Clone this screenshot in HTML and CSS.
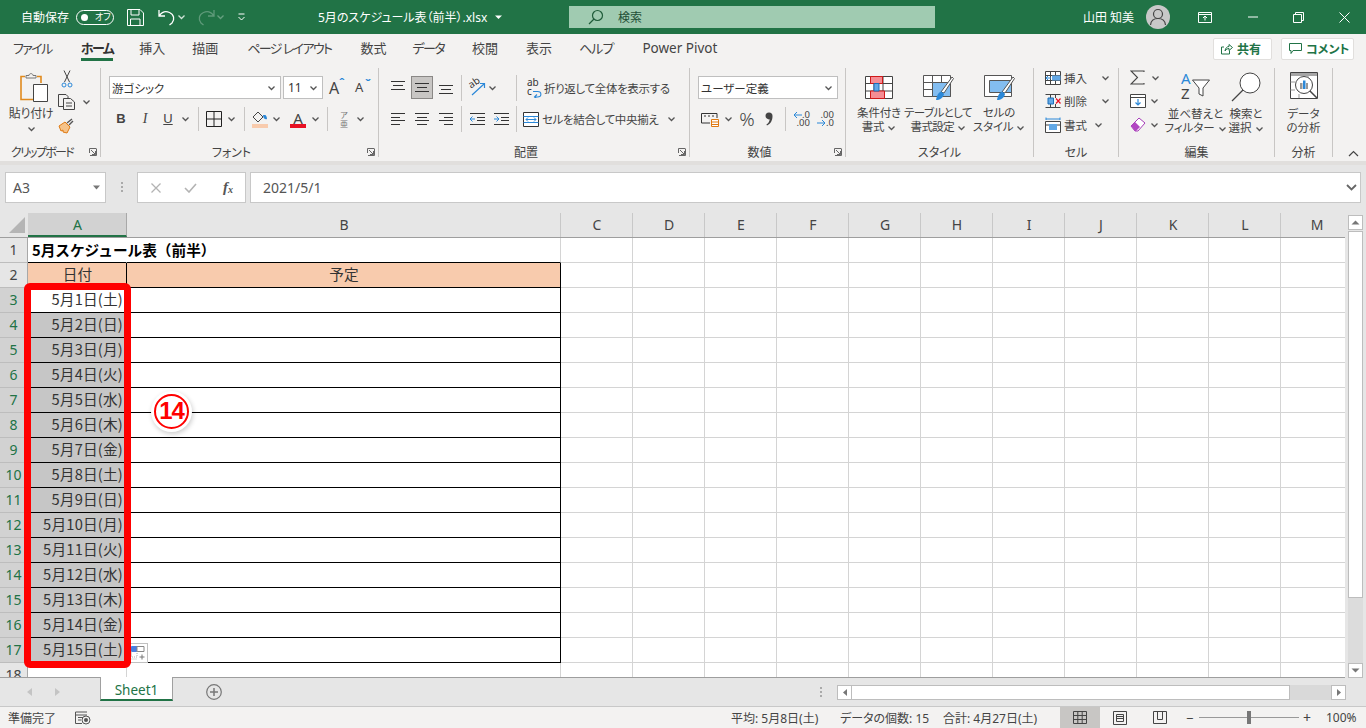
FILE: index.html
```html
<!DOCTYPE html>
<html lang="ja">
<head>
<meta charset="utf-8">
<title>5月のスケジュール表（前半）.xlsx</title>
<link rel="stylesheet" href="styles.css">
</head>
<body>
<svg class="defs" width="0" height="0"><defs>
<symbol id="chev" viewBox="0 0 9 6"><path d="M1.500 1.500 4.500 4.500 7.500 1.500" fill="none" stroke="#555" stroke-width="1.300"/></symbol>
<symbol id="chevw" viewBox="0 0 9 6"><path d="M1.500 1.500 4.500 4.500 7.500 1.500" fill="none" stroke="#cfe3d7" stroke-width="1.300"/></symbol>
<symbol id="launch" viewBox="0 0 8 8"><path d="M.5 5V.5H7.500M2 2l4.500 4.500M3 6.500h3.500V3M7.500 1v6.500H1" fill="none" stroke="#666" stroke-width="1"/></symbol>
</defs></svg>

<header class="titlebar">
  <span class="t-auto">自動保存</span>
  <span class="toggle"><i class="knob"></i><b>オフ</b></span>
  <svg class="m13" width="17" height="17" viewBox="0 0 17 17"><path d="M.5.500H13L16.500 4V16.500H.5ZM4 .5V6H12V.5M3.500 16.500V10H13V16.500" fill="none" stroke="#fff"/></svg>
  <svg class="m13" width="20" height="18" viewBox="0 0 20 18"><path d="M2 2V8H8M2.500 7.500C5 4 9 3 12.500 4.500 17 6.500 18 11.500 15 15L12.500 17" fill="none" stroke="#fff" stroke-width="1.300"/></svg>
  <svg width="9" height="6"><use href="#chevw"/></svg>
  <svg class="m10" width="20" height="18" viewBox="0 0 20 18"><path d="M18 2V8H12M17.500 7.500C15 4 11 3 7.500 4.500 3 6.500 2 11.500 5 15L7.500 17" fill="none" stroke="#5f9a7a" stroke-width="1.300"/></svg>
  <svg width="9" height="6"><use href="#chevw" opacity=".4"/></svg>
  <svg class="m12" width="9" height="8" viewBox="0 0 9 8"><path d="M1.500 1H7.500M1.500 4 4.500 7 7.500 4" fill="none" stroke="#fff"/></svg>
  <span class="t-file">5月のスケジュール表（前半）.xlsx</span>
  <svg class="m4" width="9" height="6" viewBox="0 0 9 6"><path d="M1 1.500H8L4.500 5Z" fill="#fff"/></svg>
  <div class="searchbox">
    <svg width="16" height="16" viewBox="0 0 16 16"><circle cx="9.500" cy="6.500" r="5" fill="none" stroke="#1f5c3a" stroke-width="1.200"/><path d="M6 10 1 15" stroke="#1f5c3a" stroke-width="1.200"/></svg>
    <span>検索</span>
  </div>
  <span class="t-user">山田 知美</span>
  <span class="avatar"><svg width="24" height="24" viewBox="0 0 24 24"><circle cx="12" cy="9" r="4.500" fill="none" stroke="#444" stroke-width="1.200"/><path d="M4.500 20C5 15 8.500 13.500 12 13.500S19 15 19.500 20" fill="none" stroke="#444" stroke-width="1.200"/></svg></span>
  <svg class="m28" width="14" height="11" viewBox="0 0 14 11"><path d="M.5.500H13.500V10.500H.5ZM.5 2.500H13.500M7 8.500V4.500M5 6 7 4 9 6" fill="none" stroke="#fff"/></svg>
  <svg class="m33" width="10" height="2" viewBox="0 0 10 2"><path d="M0 1H10" stroke="#fff"/></svg>
  <svg class="m35" width="11" height="11" viewBox="0 0 11 11"><path d="M.5 2.500H8.500V10.500H.5ZM2.500 2.500V.5H10.500V8.500H8.500" fill="none" stroke="#fff"/></svg>
  <svg class="m35" width="11" height="11" viewBox="0 0 11 11"><path d="M.5.500 10.500 10.500M10.500.5.5 10.500" stroke="#fff"/></svg>
</header>

<nav class="tabs">
  <span class="tab t1 kana2">ファイル</span>
  <span class="tab t2 active kana1">ホーム</span>
  <span class="tab t3">挿入</span>
  <span class="tab t4">描画</span>
  <span class="tab t5 kana2">ページ レイアウト</span>
  <span class="tab t6">数式</span>
  <span class="tab t7 kana2">データ</span>
  <span class="tab t8">校閲</span>
  <span class="tab t9">表示</span>
  <span class="tab t10 kana1">ヘルプ</span>
  <span class="tab t11">Power Pivot</span>
  <div class="tab-actions">
    <button class="act share"><svg width="12" height="12" viewBox="0 0 12 12"><path d="M8.500 7.500V11H.5V4H3M4 8C4.500 5 6 3.500 8 3.500V1.500L11.500 4.500 8 7.500V5.500C6.500 5.500 5 6.500 4 8Z" fill="none" stroke="#217346"/></svg>共有</button>
    <button class="act comment"><svg width="13" height="12" viewBox="0 0 13 12"><path d="M.5.500H12.500V7.500H4L2 10.500V7.500H.5Z" fill="none" stroke="#217346"/></svg>コメント</button>
  </div>
</nav>

<section class="ribbon">
  <div class="group g-clip">
    <div class="body">
      <div class="col paste">
        <svg class="paste-icon" width="28" height="32" viewBox="0 0 28 32"><path d="M5 4.500H1V27.500H13" fill="none" stroke="#e08a1e" stroke-width="1.600"/><path d="M17 4.500H21V11" fill="none" stroke="#e08a1e" stroke-width="1.600"/><path d="M6 6V3.500H9C9 1 13 1 13 3.500H16V6Z" fill="#f3f2f1" stroke="#777"/><path d="M13.500 12.500H27.500V29.500H13.500Z" fill="#fff" stroke="#444"/></svg>
        <span class="lbl">貼り付け</span>
        <svg class="lchev" width="9" height="6"><use href="#chev"/></svg>
      </div>
      <div class="col clip-tools">
        <div class="row-c">
          <svg class="m3" width="12" height="18" viewBox="0 0 12 18"><path d="M3 .5 8.500 12M9 .5 3.500 12" stroke="#444" fill="none"/><circle cx="3" cy="15" r="2" fill="none" stroke="#2b88d8"/><circle cx="9" cy="15" r="2" fill="none" stroke="#2b88d8"/></svg>
        </div>
        <div class="row-c">
          <svg width="18" height="16" viewBox="0 0 18 16"><path d="M5 12.500H.5V.5H8L10 2.500V4M5.500 4.500H12.500L16.500 8V15.500H5.500ZM8 9H14M8 12H14" fill="none" stroke="#444"/></svg>
          <svg class="m6" width="9" height="6"><use href="#chev"/></svg>
        </div>
        <div class="row-c">
          <svg width="16" height="16" viewBox="0 0 16 16"><path d="M1 8 7 4 12 9 9 15 5 14 5 12 3 13Z" fill="#f5c38a" stroke="#e07a12"/><path d="M9 5 14 1M11 7 15 3" stroke="#555" stroke-width="1.400"/></svg>
        </div>
      </div>
    </div>
    <div class="glabel gl-launch gl-tight">クリップボード</div>
    <svg class="launch" width="8" height="8"><use href="#launch"/></svg>
  </div>

  <div class="group g-font">
    <div class="body bodycol">
      <div class="rowa">
        <div class="sel fontsel"><span>游ゴシック</span><svg width="9" height="6"><use href="#chev"/></svg></div>
        <div class="sel sizesel"><span>11</span><svg width="9" height="6"><use href="#chev"/></svg></div>
        <span class="bigA m6">A<i class="up">ˆ</i></span>
        <span class="smallA m8">A<i class="dn">ˇ</i></span>
      </div>
      <div class="rowb">
        <b class="fmt m12">B</b>
        <i class="fmt fmt-i m8">I</i>
        <u class="fmt fmt-u m7">U</u>
        <svg class="m5" width="9" height="6"><use href="#chev"/></svg>
        <span class="vsep m8"></span>
        <svg class="m7" width="16" height="16" viewBox="0 0 16 16"><path d="M.5.500H15.500V15.500H.5ZM8 .5V15.500M.5 8H15.500" fill="none" stroke="#222"/></svg>
        <svg class="m5" width="9" height="6"><use href="#chev"/></svg>
        <span class="vsep m8"></span>
        <span class="colorbtn m7"><svg width="16" height="12" viewBox="0 0 16 12"><path d="M6 1 1 6 6 11 11 6Z" fill="none" stroke="#444"/><path d="M11 4H13C14 4 15 6 15 8 13 9 11 7 11 4Z" fill="#2b88d8"/></svg><em class="bar-fill"></em></span>
        <svg class="m4" width="9" height="6"><use href="#chev"/></svg>
        <span class="colorbtn m9"><span class="font-a">A</span><em class="bar-red"></em></span>
        <svg class="m5" width="9" height="6"><use href="#chev"/></svg>
        <span class="vsep m7"></span>
        <span class="ruby m8">ア<br>亜</span>
        <svg class="m4" width="9" height="6"><use href="#chev"/></svg>
      </div>
    </div>
    <div class="glabel gl-launch">フォント</div>
    <svg class="launch" width="8" height="8"><use href="#launch"/></svg>
  </div>

  <div class="group g-align">
    <div class="body bodycol">
      <div class="rowa rowa-al">
        <svg class="m12" width="14" height="10" viewBox="0 0 14 10"><path d="M0 .5H14M2 4.500H12M0 8.500H14" stroke="#333"/></svg>
        <span class="activebox m6"><svg width="14" height="10" viewBox="0 0 14 10"><path d="M0 .5H14M2 4.500H12M0 8.500H14" stroke="#333"/></svg></span>
        <svg class="m6 low" width="14" height="10" viewBox="0 0 14 10"><path d="M0 .5H14M2 4.500H12M0 8.500H14" stroke="#333"/></svg>
        <span class="vsep2 m8"></span>
        <span class="orient m7"><svg width="17" height="15" viewBox="0 0 17 15"><path d="M3 14 15 3M11 2.500H15.500V7" fill="none" stroke="#2b88d8" stroke-width="1.200"/></svg><em>ab</em></span>
        <svg class="m2" width="9" height="6"><use href="#chev"/></svg>
        <span class="vsep2 m19"></span>
        <span class="wrapicon m10"><em>ab<br>c</em><svg width="9" height="12" viewBox="0 0 9 12"><path d="M0 5.500H4.500C9 5.500 9 11 4.500 11H2M4 8.500 1.500 11 4 13" fill="none" stroke="#2b88d8" stroke-width="1.100"/></svg></span>
        <span class="txt m1">折り返して全体を表示する</span>
      </div>
      <div class="rowb rowb-al">
        <svg class="m12" width="14" height="12" viewBox="0 0 14 12"><path d="M0 .5H14M0 4.500H9M0 7.500H14M0 11.500H9" stroke="#333"/></svg>
        <svg class="m10" width="14" height="12" viewBox="0 0 14 12"><path d="M0 .5H14M2 4.500H12M0 7.500H14M2 11.500H12" stroke="#333"/></svg>
        <svg class="m10" width="14" height="12" viewBox="0 0 14 12"><path d="M0 .5H14M5 4.500H14M0 7.500H14M5 11.500H14" stroke="#333"/></svg>
        <span class="vsep2 m8"></span>
        <svg class="m8" width="15" height="12" viewBox="0 0 15 12"><path d="M0 .5H15M7 4.500H15M7 7.500H15M0 11.500H15" stroke="#333"/><path d="M5 6H0M2.500 3.500 0 6 2.500 8.500" fill="none" stroke="#2b88d8"/></svg>
        <svg class="m9" width="15" height="12" viewBox="0 0 15 12"><path d="M0 .5H15M7 4.500H15M7 7.500H15M0 11.500H15" stroke="#333"/><path d="M0 6H5M2.500 3.500 5 6 2.500 8.500" fill="none" stroke="#2b88d8"/></svg>
        <span class="vsep2 m7"></span>
        <svg class="m6" width="16" height="15" viewBox="0 0 16 15"><path d="M.5.500H15.500V14.500H.5Z" fill="#fff" stroke="#333"/><path d="M.5 4.500H15.500M.5 10.500H15.500" stroke="#2b88d8"/><path d="M3 7.500H13M5 5.500 3 7.500 5 9.500M11 5.500 13 7.500 11 9.500" fill="none" stroke="#2b88d8"/></svg>
        <span class="txt m3 w117">セルを結合して中央揃え</span>
        <svg class="m8" width="9" height="6"><use href="#chev"/></svg>
      </div>
    </div>
    <div class="glabel gl-launch">配置</div>
    <svg class="launch" width="8" height="8"><use href="#launch"/></svg>
  </div>

  <div class="group g-num">
    <div class="body bodycol">
      <div class="rowa"><div class="sel numsel"><span>ユーザー定義</span><svg width="9" height="6"><use href="#chev"/></svg></div></div>
      <div class="rowb">
        <svg class="m11" width="18" height="15" viewBox="0 0 18 15"><path d="M.5 1.500H16V6M9 11H.5V1.500M3 4H5M7 4H9M11 4H13" fill="none" stroke="#333"/><path d="M10.500 7.500H17.500V14.500H10.500ZM10.500 10H17.500M10.500 12.500H17.500" fill="#fff" stroke="#e07a12"/></svg>
        <svg class="m5" width="9" height="6"><use href="#chev"/></svg>
        <span class="pct m5">%</span>
        <svg class="m9" width="8" height="14" viewBox="0 0 8 14"><path d="M.5 4a3.500 3.500 0 1 1 7 0c0 4.500-2 8-5.500 9.500l-.6-1C3.500 11.300 4.500 9.500 4.700 7.300A3.500 3.500 0 0 1 .5 4Z" fill="#444"/></svg>
        <span class="vsep m12"></span>
        <span class="dec m7"><svg width="9" height="8" viewBox="0 0 9 8"><path d="M9 4H1M4 1 1 4 4 7" fill="none" stroke="#2b88d8"/></svg><em>.0<br>.00</em></span>
        <span class="dec m7"><svg class="arrowlow" width="9" height="8" viewBox="0 0 9 8"><path d="M0 4H8M5 1 8 4 5 7" fill="none" stroke="#2b88d8"/></svg><em>.00<br>.0</em></span>
      </div>
    </div>
    <div class="glabel gl-launch">数値</div>
    <svg class="launch" width="8" height="8"><use href="#launch"/></svg>
  </div>

  <div class="group g-style">
    <div class="body">
      <div class="col big w52 m7">
        <svg class="bigicon" width="28" height="24" viewBox="0 0 28 24"><path d="M.5.500H27.500V22.500H.5ZM.5 7.500H27.500M.5 15H27.500M9 .5V22.500M18 .5V22.500" fill="#fff" stroke="#444"/><path d="M5.500.5H17.500V7.500H5.500ZM5.500 15H19.500V22.500H5.500Z" fill="#f58d94" stroke="#d01818"/><path d="M9 7.500H14V15H9Z" fill="#62a8e6" stroke="#1a6fb8"/></svg>
        <span class="lbl">条件付き<br>書式 <svg width="9" height="6"><use href="#chev"/></svg></span>
      </div>
      <div class="col big w66">
        <svg class="bigicon" width="31" height="26" viewBox="0 0 31 26"><path d="M.5.500H27.500V21.500H.5ZM.5 7.500H27.500M.5 14.500H27.500M9.500.5V21.500M18.500.5V21.500" fill="#fff" stroke="#555"/><path d="M9.500 7.500H27.500V21.500H9.500Z" fill="#83bdf0" stroke="#555"/><path d="M18 17 29 2 30.500 3.500 21 18Z" fill="#fff" stroke="#555"/><path d="M13 25C14 20 16 16 19 17L21 19C20 23 17 25 13 25Z" fill="#2b88d8"/></svg>
        <span class="lbl">テーブルとして<br>書式設定 <svg width="9" height="6"><use href="#chev"/></svg></span>
      </div>
      <div class="col big w56">
        <svg class="bigicon" width="31" height="26" viewBox="0 0 31 26"><path d="M.5.500H27.500V21.500H.5Z" fill="#fff" stroke="#555"/><path d="M5.500 5.500H27.500V17.500H5.500Z" fill="#83bdf0" stroke="#555"/><path d="M18 17 29 2 30.500 3.500 21 18Z" fill="#fff" stroke="#555"/><path d="M13 25C14 20 16 16 19 17L21 19C20 23 17 25 13 25Z" fill="#2b88d8"/></svg>
        <span class="lbl">セルの<br>スタイル <svg width="9" height="6"><use href="#chev"/></svg></span>
      </div>
    </div>
    <div class="glabel">スタイル</div>
  </div>

  <div class="group g-cell">
    <div class="body bodycol cell-tools">
      <div class="cellrow"><svg width="16" height="14" viewBox="0 0 16 14"><path d="M.5.500H15.500V13.500H.5ZM.5 4.500H15.500M.5 9.500H15.500M5.500.5V13.500M10.500.5V13.500" fill="#fff" stroke="#444"/><path d="M7 4.500H15.500V9.500H7Z" fill="#62a8e6"/><path d="M6 7H1M3 5 1 7 3 9" fill="none" stroke="#2b88d8"/></svg><span class="txt m3 w28">挿入</span><svg class="m9" width="9" height="6"><use href="#chev"/></svg></div>
      <div class="cellrow"><svg width="16" height="14" viewBox="0 0 16 14"><path d="M.5.500H15.500M.5 13.500H15.500M5.500.5V4M5.500 10V13.500M10.500.5V4M10.500 10V13.500" fill="none" stroke="#444"/><path d="M3 4H8.500V10H3Z" fill="#62a8e6" stroke="#1a6fb8"/><path d="M11 4.500 15.500 9.500M15.500 4.500 11 9.500" stroke="#e81123" stroke-width="1.200"/></svg><span class="txt m3 w28">削除</span><svg class="m9" width="9" height="6"><use href="#chev"/></svg></div>
      <div class="cellrow"><svg width="16" height="16" viewBox="0 0 16 16"><path d="M1 .5V3M15 .5V3M1 2H15" fill="none" stroke="#2b88d8"/><path d="M.5 4.500H15.500V15.500H.5ZM.5 8H15.500" fill="#fff" stroke="#444"/><path d="M4 7H12V13H4Z" fill="#62a8e6"/></svg><span class="txt m3 w28">書式</span><svg class="m2" width="9" height="6"><use href="#chev"/></svg></div>
    </div>
    <div class="glabel">セル</div>
  </div>

  <div class="group g-edit">
    <div class="body">
      <div class="col edit-tools">
        <div class="cellrow2"><svg width="15" height="15" viewBox="0 0 15 15"><path d="M14 2V1H1L7.500 7.500 1 14H14V13" fill="none" stroke="#444" stroke-width="1.100"/></svg><svg class="m6" width="9" height="6"><use href="#chev"/></svg></div>
        <div class="cellrow2"><svg width="16" height="14" viewBox="0 0 16 14"><path d="M.5.500H15.500V13.500H.5ZM.5 3.500H15.500" fill="#fff" stroke="#444"/><path d="M8 5V11M5.500 8.500 8 11 10.500 8.500" fill="none" stroke="#2b88d8" stroke-width="1.200"/></svg><svg class="m4" width="9" height="6"><use href="#chev"/></svg></div>
        <div class="cellrow2"><svg width="16" height="15" viewBox="0 0 16 15"><path d="M1 9 9 1 15 6 8 14H5Z" fill="#fff" stroke="#a63db8"/><path d="M1 9 5 5 10 10 6 14 5 14Z" fill="#b146c2"/></svg><svg class="m4" width="9" height="6"><use href="#chev"/></svg></div>
      </div>
      <div class="col big w57">
        <svg class="bigicon2" width="30" height="28" viewBox="0 0 30 28"><text x="0" y="12" class="az-a">A</text><text x="0" y="27" class="az-z">Z</text><path d="M11.500 8H28.500L22 16V24L18 22V16Z" fill="#fff" stroke="#444"/></svg>
        <span class="lbl lbl-t">並べ替えと<br>フィルター <svg width="9" height="6"><use href="#chev"/></svg></span>
      </div>
      <div class="col big w44">
        <svg class="bigicon2" width="30" height="30" viewBox="0 0 30 30"><circle cx="19" cy="11" r="10" fill="#fff" stroke="#444"/><path d="M12 18 1 29" stroke="#444" stroke-width="1.200"/></svg>
        <span class="lbl lbl-t2">検索と<br>選択 <svg width="9" height="6"><use href="#chev"/></svg></span>
      </div>
    </div>
    <div class="glabel">編集</div>
  </div>

  <div class="group g-ana">
    <div class="body">
      <div class="col big w57">
        <svg class="bigicon2" width="28" height="28" viewBox="0 0 28 28"><path d="M.5.500H27.500V26.500H.5Z" fill="#fff" stroke="#444"/><path d="M1 1H27V4H1Z" fill="#a6a6a6"/><path d="M.5 10H5M.5 18H5M9 26V22M18 4V6" stroke="#999"/><circle cx="14" cy="13" r="8.500" fill="#fff" stroke="#444"/><path d="M10 11H12.500V17H10Z" fill="#999"/><path d="M13 8.500H15.500V17H13Z" fill="#2b88d8"/><path d="M16 11H18V17H16Z" fill="#999"/><path d="M20 19 27 26" stroke="#444" stroke-width="1.500"/></svg>
        <span class="lbl lbl-t">データ<br>の分析</span>
      </div>
    </div>
    <div class="glabel">分析</div>
  </div>
  <svg class="collapse" width="11" height="7" viewBox="0 0 11 7"><path d="M1 6 5.500 1.500 10 6" fill="none" stroke="#444" stroke-width="1.200"/></svg>
</section>

<div class="formula">
  <div class="namebox"><span>A3</span><svg width="9" height="5" viewBox="0 0 9 5"><path d="M1 .5H8L4.500 4.500Z" fill="#777"/></svg></div>
  <span class="fdots"></span>
  <div class="fbtns">
    <svg width="10" height="10" viewBox="0 0 10 10"><path d="M.5.500 9.500 9.500M9.500.5.5 9.500" stroke="#b3b3b3" stroke-width="1.300"/></svg>
    <svg width="13" height="10" viewBox="0 0 13 10"><path d="M1 5 5 9 12 1" fill="none" stroke="#b3b3b3" stroke-width="1.600"/></svg>
    <span class="fx">f<sub>x</sub></span>
  </div>
  <div class="finput"><span>2021/5/1</span><svg width="11" height="7" viewBox="0 0 11 7"><path d="M1 1 5.500 5.500 10 1" fill="none" stroke="#666" stroke-width="1.800"/></svg></div>
</div>

<div class="workarea">
  <div class="sheet">
    <div class="colhead">
      <div class="corner"><svg width="18" height="18" viewBox="0 0 18 18"><path d="M17 1V17H1Z" fill="#b5b5b5"/></svg></div>
      <div class="ch ch-a">A</div><div class="ch ch-b">B</div>
      <div class="ch ch-n">C</div><div class="ch ch-n">D</div><div class="ch ch-n">E</div><div class="ch ch-n">F</div><div class="ch ch-n">G</div><div class="ch ch-n">H</div><div class="ch ch-n">I</div><div class="ch ch-n">J</div><div class="ch ch-n">K</div><div class="ch ch-n">L</div><div class="ch ch-m">M</div>
    </div>
    <div class="row r-line"><div class="rh">1</div><div class="ca title-cell">5月スケジュール表（前半）</div><div class="cb"></div><div class="rest"></div></div>
    <div class="row r-head"><div class="rh">2</div><div class="ca">日付</div><div class="cb">予定</div><div class="rest"></div></div>
    <div class="row r-data r-first"><div class="rh">3</div><div class="ca">5月1日(土)</div><div class="cb"></div><div class="rest"></div></div>
    <div class="row r-data"><div class="rh">4</div><div class="ca">5月2日(日)</div><div class="cb"></div><div class="rest"></div></div>
    <div class="row r-data"><div class="rh">5</div><div class="ca">5月3日(月)</div><div class="cb"></div><div class="rest"></div></div>
    <div class="row r-data"><div class="rh">6</div><div class="ca">5月4日(火)</div><div class="cb"></div><div class="rest"></div></div>
    <div class="row r-data"><div class="rh">7</div><div class="ca">5月5日(水)</div><div class="cb"></div><div class="rest"></div></div>
    <div class="row r-data"><div class="rh">8</div><div class="ca">5月6日(木)</div><div class="cb"></div><div class="rest"></div></div>
    <div class="row r-data"><div class="rh">9</div><div class="ca">5月7日(金)</div><div class="cb"></div><div class="rest"></div></div>
    <div class="row r-data"><div class="rh">10</div><div class="ca">5月8日(土)</div><div class="cb"></div><div class="rest"></div></div>
    <div class="row r-data"><div class="rh">11</div><div class="ca">5月9日(日)</div><div class="cb"></div><div class="rest"></div></div>
    <div class="row r-data"><div class="rh">12</div><div class="ca">5月10日(月)</div><div class="cb"></div><div class="rest"></div></div>
    <div class="row r-data"><div class="rh">13</div><div class="ca">5月11日(火)</div><div class="cb"></div><div class="rest"></div></div>
    <div class="row r-data"><div class="rh">14</div><div class="ca">5月12日(水)</div><div class="cb"></div><div class="rest"></div></div>
    <div class="row r-data"><div class="rh">15</div><div class="ca">5月13日(木)</div><div class="cb"></div><div class="rest"></div></div>
    <div class="row r-data"><div class="rh">16</div><div class="ca">5月14日(金)</div><div class="cb"></div><div class="rest"></div></div>
    <div class="row r-data"><div class="rh">17</div><div class="ca">5月15日(土)</div><div class="cb"></div><div class="rest"></div></div>
    <div class="row r-plain"><div class="rh">18</div><div class="ca"></div><div class="cb"></div><div class="rest"></div></div>

    <div class="pasteopt"><svg width="16" height="16" viewBox="0 0 16 16"><path d="M.5.500H6V5.500H.5Z" fill="#4a7fe0" stroke="#4a7fe0"/><path d="M6 .5H13V5.500H6Z" fill="#fff" stroke="#888"/><path d="M.5 5.500V11H6V5.500M.5 13H6" fill="none" stroke="#aaa" stroke-dasharray="1 1"/><path d="M11 8.500V13.500M8.500 11H13.500" stroke="#777"/></svg></div>
    <div class="redbox"></div>
    <div class="callout"><span>14</span></div>
  </div>
  <div class="vbar">
    <div class="sbtn"><svg width="9" height="5" viewBox="0 0 9 5"><path d="M.5 4.500H8.500L4.500 .5Z" fill="#777"/></svg></div>
    <div class="vthumb"></div>
    <div class="vtrack"></div>
    <div class="sbtn"><svg width="9" height="5" viewBox="0 0 9 5"><path d="M.5.500H8.500L4.500 4.500Z" fill="#777"/></svg></div>
  </div>
</div>

<div class="tabbar">
  <svg class="tnav" width="5" height="8" viewBox="0 0 5 8"><path d="M5 0V8L0 4Z" fill="#c4c4c4"/></svg>
  <svg class="tnav2" width="5" height="8" viewBox="0 0 5 8"><path d="M0 0V8L5 4Z" fill="#c4c4c4"/></svg>
  <div class="sheettab">Sheet1</div>
  <svg class="addsheet" width="16" height="16" viewBox="0 0 16 16"><circle cx="8" cy="8" r="7.300" fill="none" stroke="#777" stroke-width="1.200"/><path d="M8 4V12M4 8H12" stroke="#777" stroke-width="1.500"/></svg>
  <span class="hdots"></span>
  <div class="hscroll">
    <div class="hbtn"><svg width="4" height="7" viewBox="0 0 4 7"><path d="M4 0V7L0 3.500Z" fill="#777"/></svg></div>
    <div class="hthumb"></div>
    <div class="htrack"></div>
    <div class="hbtn"><svg width="4" height="7" viewBox="0 0 4 7"><path d="M0 0V7L4 3.500Z" fill="#777"/></svg></div>
  </div>
</div>

<footer class="status">
  <span class="st-ready">準備完了</span>
  <svg class="st-macro" width="16" height="14" viewBox="0 0 16 14"><path d="M12 1H.5V12.500H7M.5 4H12M3 6.500H8M3 9H6" fill="none" stroke="#555"/><circle cx="11" cy="9" r="4" fill="none" stroke="#555"/><circle cx="11" cy="9" r="2" fill="#555"/></svg>
  <span class="st-avg">平均: 5月8日(土)</span>
  <span class="st-count">データの個数: 15</span>
  <span class="st-sum">合計: 4月27日(土)</span>
  <span class="view view-on"><svg width="14" height="13" viewBox="0 0 14 13"><path d="M.5.500H13.500V12.500H.5ZM.5 4.500H13.500M.5 8.500H13.500M4.800.5V12.500M9.200.5V12.500" fill="none" stroke="#444"/></svg></span>
  <span class="view"><svg width="14" height="14" viewBox="0 0 14 14"><path d="M.5.500H13.500V13.500H.5ZM3.500 3.500H10.500V10.500H3.500ZM3.500 5.500H10.500M3.500 7.500H10.500" fill="none" stroke="#444"/></svg></span>
  <span class="view"><svg width="14" height="14" viewBox="0 0 14 14"><path d="M.5.500H13.500V12.500H.5ZM4.500.5V8.500H9.500V.5" fill="none" stroke="#444"/></svg></span>
  <span class="zm">−</span>
  <span class="slider"><i></i></span>
  <span class="zp">+</span>
  <span class="zoomv">100%</span>
</footer>
</body>
</html>
```

FILE: styles.css
```css
* { box-sizing: border-box; }
html, body { margin: 0; padding: 0; }
body {
  width: 1366px; height: 728px; overflow: hidden;
  display: flex; flex-direction: column;
  font-family: "Noto Sans", "Noto Sans CJK JP", sans-serif;
  font-size: 12px; color: #444; background: #f3f2f1;
  font-feature-settings: "palt";
}
.defs { position: absolute; }
svg { flex: none; display: block; }
.lbl svg, .glabel svg { display: inline-block; vertical-align: middle; }
i, em { font-style: normal; }

.m1 { margin-left: 1px; } .m2 { margin-left: 2px; } .m3 { margin-left: 3px; } .m4 { margin-left: 4px; }
.m5 { margin-left: 5px; } .m6 { margin-left: 6px; } .m7 { margin-left: 7px; } .m8 { margin-left: 8px; }
.m9 { margin-left: 9px; } .m10 { margin-left: 10px; } .m11 { margin-left: 11px; } .m12 { margin-left: 12px; }
.m13 { margin-left: 13px; } .m19 { margin-left: 19px; } .m28 { margin-left: 28px; } .m33 { margin-left: 36px; } .m35 { margin-left: 35px; }

/* title bar */
.titlebar { height: 34px; background: #217346; color: #fff; display: flex; align-items: center; padding-left: 21px; flex: none; }
.t-auto { font-size: 12px; width: 48px; }
.toggle { width: 38px; height: 15px; margin-left: 7px; border: 1px solid #fff; border-radius: 8px; display: flex; align-items: center; padding-left: 4px; }
.knob { width: 7px; height: 7px; border-radius: 50%; background: #fff; }
.toggle b { font-weight: 400; font-size: 9px; margin-left: 7px; line-height: 12px; }
.t-file { font-size: 12px; margin-left: 72px; width: 172px; white-space: nowrap; }
.searchbox { width: 366px; height: 22px; margin-left: 66px; background: #a0cbb1; color: #1f4f36; display: flex; align-items: center; padding-left: 19px; }
.searchbox span { margin-left: 14px; font-size: 12px; }
.t-user { margin-left: 148px; width: 52px; font-size: 12px; white-space: nowrap; }
.avatar { width: 24px; height: 24px; border-radius: 50%; background: #c8c8c8; margin-left: 11px; }

/* tabs */
.tabs { height: 31px; flex: none; display: flex; align-items: flex-start; padding-left: 13px; background: #f3f2f1; font-size: 13px; color: #444; position: relative; }
.tab { line-height: 18px; padding-top: 5px; height: 27px; white-space: nowrap; }
.kana1 { letter-spacing: -1px; }
.kana2 { letter-spacing: -1.600px; }
.t2 { margin-left: 29px; letter-spacing: -1.500px; } .t3 { margin-left: 26px; } .t4 { margin-left: 27px; } .t5 { margin-left: 29px; }
.t6 { margin-left: 29px; } .t7 { margin-left: 26px; } .t8 { margin-left: 28px; } .t9 { margin-left: 28px; }
.t10 { margin-left: 27px; } .t11 { margin-left: 29px; font-size: 13.500px; }
.active { font-weight: 700; color: #333; border-bottom: 3px solid #217346; }
.tab-actions { margin-left: auto; display: flex; gap: 9px; padding: 4px 12px 0 0; }
.act { height: 22px; border: 1px solid #e1dfdd; border-radius: 2px; background: #fff; color: #217346; font: inherit; font-size: 12px; font-weight: 700; display: flex; align-items: center; gap: 4px; padding: 0 0 0 7px; }
.share { width: 59px; } .comment { width: 73px; }

/* ribbon */
.ribbon { height: 96px; flex: none; display: flex; padding-top: 3px; background: #f3f2f1; border-bottom: 0; position: relative; }
.group { height: 89px; border-right: 1px solid #c8c6c4; display: flex; flex-direction: column; position: relative; flex: none; }
.g-clip { width: 101px; } .g-font { width: 278px; } .g-align { width: 311px; } .g-num { width: 156px; }
.g-style { width: 188px; } .g-cell { width: 85px; } .g-edit { width: 156px; } .g-ana { width: 58px; }
.body { flex: 1; display: flex; min-height: 0; }
.bodycol { flex-direction: column; }
.glabel { height: 12px; line-height: 16px; text-align: center; font-size: 12px; color: #444; flex: none; white-space: nowrap; }
.gl-launch { padding-right: 16px; }
.gl-tight { letter-spacing: -1.700px; }
.launch { position: absolute; right: 3px; bottom: 1px; }
.col { display: flex; flex-direction: column; align-items: center; }
.paste { width: 58px; padding: 4px 0 0 4px; }
.paste-icon { margin-left: 5px; }
.lbl { line-height: 14px; font-size: 11.500px; text-align: center; white-space: nowrap; color: #444; }
.paste .lbl { margin-top: 3px; font-size: 12px; letter-spacing: -.3px; }
.lchev { margin-top: 5px; }
.clip-tools { align-items: flex-start; margin-top: -1px; }
.row-c { display: flex; align-items: center; height: 23.500px; }

.rowa { height: 23px; margin-top: 8px; display: flex; align-items: center; padding-left: 8px; flex: none; }
.rowb { height: 28px; margin-top: 6px; display: flex; align-items: center; flex: none; }
.sel { height: 23px; background: #fff; border: 1px solid #bfbfbf; display: flex; align-items: center; justify-content: space-between; padding: 0 4px 0 2px; color: #333; }
.fontsel { width: 172px; font-size: 11.500px; }
.sizesel { width: 40px; margin-left: 2px; font-family: "Noto Sans"; font-size: 12px; padding-left: 4px; }
.numsel { width: 140px; font-size: 11.500px; padding-left: 2px; }
.bigA, .smallA { position: relative; color: #444; line-height: 1; }
.bigA { font-size: 16px; width: 18px; } .smallA { font-size: 13px; width: 17px; }
.up, .dn { position: absolute; color: #2b88d8; font-size: 12px; font-weight: 700; top: -2px; left: 10px; }
.fmt { width: 16px; text-align: center; font-size: 13px; color: #444; font-family: "Liberation Sans"; line-height: 16px; display: block; }
.fmt-i { font-style: italic; font-family: "Liberation Serif"; font-size: 14px; }
.vsep { width: 1px; height: 24px; background: #c8c6c4; }
.vsep2 { width: 1px; height: 26px; background: #c8c6c4; }
.colorbtn { width: 16px; display: flex; flex-direction: column; align-items: center; position: relative; height: 17px; }
.bar-fill, .bar-red { position: absolute; left: 0; right: 0; bottom: 0; height: 4px; }
.bar-fill { background: #f8cbad; } .bar-red { background: #e81123; }
.font-a { font-size: 15px; line-height: 14px; font-family: "Noto Sans"; color: #444; }
.ruby { width: 16px; font-size: 8px; line-height: 9px; text-align: center; color: #777; }
.rowa-al { padding-left: 0; }
.activebox { width: 22px; height: 23px; background: #c8c6c4; border: 1px solid #8a8886; display: flex; align-items: center; justify-content: center; }
.low { margin-top: 4px; }
.rowa-al .m12:first-child { margin-top: -4px; }
.orient { position: relative; width: 17px; height: 16px; }
.orient svg { position: absolute; left: 0; top: 1px; }
.orient em { position: absolute; left: -1px; top: -3px; font-size: 10px; line-height: 11px; transform: rotate(-35deg); color: #333; font-family: "Noto Sans"; }
.wrapicon { display: flex; width: 16px; align-items: flex-start; position: relative; height: 22px; }
.wrapicon em { font-size: 10px; line-height: 9px; color: #333; font-family: "Noto Sans"; margin-top: 1px; }
.wrapicon svg { position: absolute; left: 6px; top: 9px; }
.txt { color: #444; font-size: 11.500px; white-space: nowrap; }
.rowa-al .txt, .rowb-al .txt { letter-spacing: -.35px; }
.w117 { width: 117px; }
.pct { font-size: 19px; width: 18px; color: #444; line-height: 20px; text-align: center; font-family: "Noto Sans"; font-weight: 300; }
.dec { position: relative; width: 17px; height: 16px; display: block; }
.dec svg { position: absolute; left: 0; top: 0; }
.dec .arrowlow { top: 8px; }
.dec em { position: absolute; right: 0; top: 0; font-size: 9.500px; line-height: 8px; text-align: right; font-family: "Noto Sans"; color: #444; }

.big { padding-top: 4px; }
.w52 { width: 52px; } .w66 { width: 66px; } .w56 { width: 56px; } .w57 { width: 57px; } .w44 { width: 44px; } .w28 { width: 28px; }
.bigicon { height: 26px; margin-top: 3px; }
.big .lbl { margin-top: 4px; }
.g-style .big .lbl { margin-top: 5px; letter-spacing: -.2px; }
.g-style .w66 .lbl { letter-spacing: -.6px; }
.bigicon2 { margin-top: 0; }
.big .lbl-t { margin-top: 7px; }
.big .lbl-t2 { margin-top: 5px; }

.cell-tools { padding: 0 0 0 11px; margin-top: -2px; }
.cellrow { height: 23.500px; display: flex; align-items: center; }
.edit-tools { width: 48px; padding: 0 0 0 11px; align-items: flex-start; margin-top: -2px; }
.cellrow2 { height: 23.500px; display: flex; align-items: center; }
.az-a { font: 15px "Noto Sans"; fill: #2b88d8; }
.az-z { font: 15px "Noto Sans"; fill: #444; }
.collapse { position: absolute; right: 7px; bottom: 4px; }

/* formula bar */
.formula { height: 52px; flex: none; background: #e6e6e6; padding: 7px 5px 0; display: flex; align-items: flex-start; border-top: 4px solid #e1dfdd; }
.namebox { width: 101px; height: 31px; background: #fff; border: 1px solid #c8c8c8; display: flex; align-items: center; justify-content: space-between; padding: 0 4px 0 7px; font-size: 14px; color: #555; font-family: "Noto Sans"; }
.fdots { width: 2px; height: 10px; margin: 10px 0 0 15px; background: repeating-linear-gradient(#aaa 0 2px, transparent 2px 4px); }
.fbtns { width: 109px; height: 31px; margin-left: 14px; background: #fff; border: 1px solid #c8c8c8; display: flex; align-items: center; padding-left: 13px; gap: 23px; }
.fx { font-family: "Liberation Serif"; font-style: italic; font-weight: 700; font-size: 15px; color: #555; margin-left: 3px; }
.fx sub { font-size: 10px; vertical-align: -1px; }
.finput { width: 1111px; height: 31px; margin-left: 4px; background: #fff; border: 1px solid #c8c8c8; display: flex; align-items: center; justify-content: space-between; padding: 0 3px 0 12px; font-size: 14px; color: #555; font-family: "Noto Sans"; }

/* sheet */
.workarea { height: 465px; flex: none; display: flex; background: #e6e6e6; }
.sheet { width: 1345px; height: 465px; overflow: hidden; position: relative; background: #fff; border-bottom: 1px solid #9e9e9e; }
.colhead { height: 25px; display: flex; background: #e6e6e6; border-bottom: 1px solid #9e9e9e; }
.corner { width: 28px; display: flex; justify-content: flex-end; align-items: flex-end; padding: 0 2px 3px 0; }
.ch { height: 24px; line-height: 24px; text-align: center; font-size: 14px; color: #444; border-right: 1px solid #c8c8c8; flex: none; font-family: "Noto Sans"; padding-left: 1px; }
.ch-a { width: 99px; background: #d2d2d2; color: #217346; border-bottom: 2px solid #217346; border-right-color: #a8a8a8; }
.ch-b { width: 434px; }
.ch-n { width: 72px; }
.ch-m { width: 64px; border-right: 0; padding-left: 8px; }
.row { height: 25px; display: flex; font-family: "Noto Sans CJK JP", sans-serif; font-feature-settings: normal; font-size: 14.670px; color: #222; }
.rh { width: 28px; flex: none; background: #e6e6e6; border-right: 1px solid #a8a8a8; border-bottom: 1px solid #bdbdbd; text-align: center; line-height: 23px; font-size: 14px; color: #444; font-family: "Noto Sans"; }
.ca, .cb { flex: none; height: 25px; line-height: 22px; white-space: nowrap; }
.ca { width: 99px; border-right: 1px solid #d4d4d4; border-bottom: 1px solid #d4d4d4; }
.cb { width: 434px; border-right: 1px solid #d4d4d4; border-bottom: 1px solid #d4d4d4; }
.rest { flex: 1; border-bottom: 1px solid #d4d4d4; background: repeating-linear-gradient(90deg, transparent 0 71px, #d4d4d4 71px 72px); }
.r-line .ca, .r-line .cb { border-bottom-color: #000; }
.r-line .rh { line-height: 24px; }
.title-cell { font-weight: 700; padding-left: 4px; border-right-color: transparent; overflow: visible; color: #000; line-height: 24px; }
.r-head .ca, .r-head .cb { background: #f8cbad; border-right-color: #000; border-bottom-color: #000; text-align: center; color: #333; padding-left: 1px; }
.r-data .ca { background: #c6c6c6; border-right-color: #000; border-bottom-color: #000; text-align: right; padding-right: 3px; color: #333; letter-spacing: .2px; }
.r-data .cb { border-right-color: #000; border-bottom-color: #000; }
.r-first .ca { background: #fff; }
.r-data .rh { background: #d2d2d2; color: #217346; }
.pasteopt { position: absolute; left: 131px; top: 430px; width: 17px; height: 20px; background: #fff; border: 1px solid #c0c0c0; border-left: 0; padding: 2px 0 0 0; }
.redbox { position: absolute; left: 24px; top: 70px; width: 107px; height: 385px; border: 7px solid #ff0000; border-radius: 6px; }
.callout { position: absolute; left: 151px; top: 178px; width: 41px; height: 41px; border-radius: 50%; background: #fff; box-shadow: 1px 2px 5px rgba(0,0,0,.2); display: flex; align-items: center; justify-content: center; }
.callout span { width: 35px; height: 35px; border: 2px solid #f00; border-radius: 50%; color: #f00; font: 700 24px/29px "Liberation Sans", sans-serif; text-align: center; letter-spacing: -1px; }

.vbar { width: 21px; padding: 2px 3px 0 3px; display: flex; flex-direction: column; }
.sbtn { width: 15px; height: 15px; background: #fff; border: 1px solid #bdbdbd; display: flex; align-items: center; justify-content: center; flex: none; }
.vthumb { width: 15px; height: 367px; background: #fff; border: 1px solid #bdbdbd; flex: none; margin-top: 1px; }
.vtrack { flex: 1; background: #dcdcdc; }

/* tab bar */
.tabbar { height: 29px; flex: none; display: flex; align-items: flex-start; background: #e6e6e6; border-bottom: 1px solid #c8c8c8; position: relative; }
.tnav { margin: 10px 0 0 27px; }
.tnav2 { margin: 10px 0 0 23px; }
.sheettab { width: 73px; height: 24px; margin-left: 40px; background: #fff; border: 1px solid #a0a0a0; border-top: 0; border-bottom: 2px solid #217346; color: #217346; text-align: center; padding-top: 2px; line-height: 22px; font-size: 13.500px; margin-top: -1px; }
.addsheet { margin: 6px 0 0 33px; }
.hdots { width: 2px; height: 10px; margin: 9px 0 0 598px; background: repeating-linear-gradient(#aaa 0 2px, transparent 2px 4px); }
.hscroll { width: 509px; height: 15px; margin: 7px 0 0 15px; display: flex; background: #d9d9d9; }
.hbtn { width: 15px; height: 15px; background: #fff; border: 1px solid #bdbdbd; display: flex; align-items: center; justify-content: center; flex: none; }
.hthumb { width: 438px; height: 15px; background: #fff; border: 1px solid #bdbdbd; border-left: 0; }
.htrack { flex: 1; }

/* status */
.status { height: 21px; flex: none; display: flex; align-items: center; background: #f3f2f1; font-size: 12px; color: #444; padding-left: 8px; }
.st-ready { width: 48px; }
.st-macro { margin-left: 19px; }
.st-avg { margin-left: 640px; width: 109px; white-space: nowrap; }
.st-count { width: 103px; white-space: nowrap; }
.st-sum { width: 117px; white-space: nowrap; }
.view { width: 40px; height: 21px; display: flex; align-items: center; justify-content: center; flex: none; }
.view-on { background: #c8c6c4; }
.zm { margin-left: 6px; width: 10px; font-size: 13px; }
.slider { width: 100px; height: 1px; background: #999; margin-left: 3px; position: relative; }
.slider i { position: absolute; left: 48px; top: -6px; width: 4px; height: 13px; background: #777; }
.zp { margin-left: 4px; width: 10px; font-size: 14px; }
.zoomv { margin-left: 13px; font-size: 12px; font-family: "Noto Sans"; }
```
